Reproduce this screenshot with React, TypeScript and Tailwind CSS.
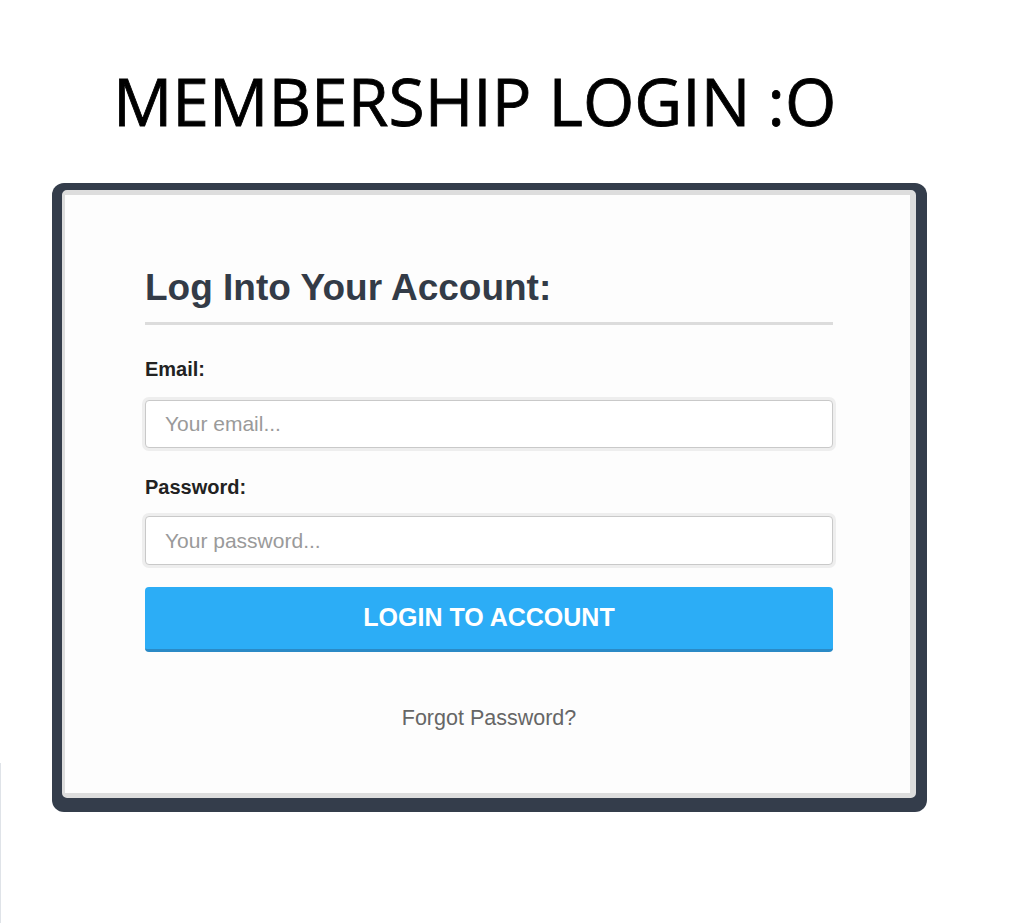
import React, { useState } from "react";

export default function App() {
  const [email, setEmail] = useState("");
  const [password, setPassword] = useState("");

  return (
    <div className="flex min-h-[923px] w-full bg-white">
      {/* thin stray edge line at far left */}
      <div className="mt-[763px] h-[160px] w-px shrink-0 bg-[#dfe3e8]" />

      <div className="flex-1">
        <h1
          className="mt-[67px] pl-[112px] text-[66px] leading-none font-normal text-black [-webkit-text-stroke:0.8px_black]"
          style={{ fontFamily: '"Open Sans", "Noto Sans", sans-serif' }}
        >
          MEMBERSHIP LOGIN :O
        </h1>

        {/* card: dark frame + light inner border */}
        <div className="mt-[50px] ml-[51px] w-[875px] rounded-[12px] bg-[#343d4b] pt-[7px] pl-[10px] pr-[11px] pb-[14px]">
          <div className="rounded-[5px] border-l-[3px] border-t-[5px] border-r-[6px] border-b-[5px] border-[#dddddd] bg-[#fdfdfd] pl-[80px] pr-[77px] pt-[74px] pb-[63px] font-['Liberation_Sans',Arial,sans-serif]">
            <h2 className="text-[37px] leading-none font-bold text-[#333b47]">Log Into Your Account:</h2>
            <div className="mt-[16px] h-[3px] bg-[#dcdcdc]" />

            <form onSubmit={(e) => e.preventDefault()}>
              <label className="mt-[34px] block text-[20px] leading-none font-bold text-[#222222]">Email:</label>
              <input
                type="email"
                placeholder="Your email..."
                value={email}
                onChange={(e) => setEmail(e.target.value)}
                className="mt-[21px] block h-[48px] w-full rounded-[4px] border border-[#c9c9c9] bg-white pl-[19px] text-[21px] text-[#333] placeholder-[#9a9a9a] shadow-[0_0_0_3px_#eeeeee] outline-none"
              />

              <label className="mt-[29px] block text-[20px] leading-none font-bold text-[#222222]">Password:</label>
              <input
                type="password"
                placeholder="Your password..."
                value={password}
                onChange={(e) => setPassword(e.target.value)}
                className="mt-[19px] block h-[49px] w-full rounded-[4px] border border-[#c9c9c9] bg-white pl-[19px] text-[21px] text-[#333] placeholder-[#9a9a9a] shadow-[0_0_0_3px_#eeeeee] outline-none"
              />

              <button
                type="submit"
                className="mt-[22px] flex h-[65px] w-full items-center justify-center rounded-[4px] border-b-[3px] border-[#2a8ac6] bg-[#2cadf6] text-[25px] font-bold text-white"
              >
                LOGIN TO ACCOUNT
              </button>
            </form>

            <div className="mt-[56px] text-center text-[21.5px] leading-none text-[#666666]">Forgot Password?</div>
          </div>
        </div>
      </div>
    </div>
  );
}
